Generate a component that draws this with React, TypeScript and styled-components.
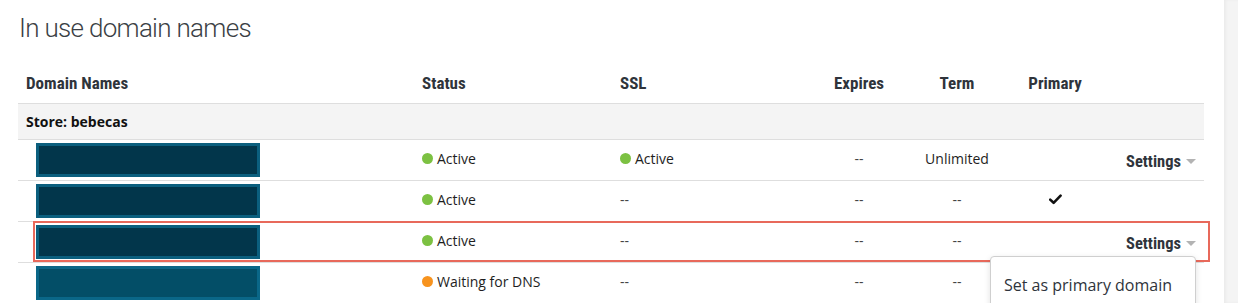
import styled, { createGlobalStyle } from 'styled-components';

const GlobalStyle = createGlobalStyle`
  html, body {
    margin: 0;
    padding: 0;
    background: #ffffff;
  }
  body {
    font-family: "Open Sans", "Liberation Sans", sans-serif;
    color: #1e1e1e;
  }
`;

type Align = 'left' | 'center' | 'right';

interface DomainRow {
  tone: 'dark' | 'light';
  status: { label: string; color: string };
  ssl?: { label: string; color: string };
  term: string;
  primary: boolean;
  settings: boolean;
  highlighted?: boolean;
  menu?: boolean;
}

const columns = [
  { title: 'Domain Names', align: 'left' as Align },
  { title: 'Status', align: 'left' as Align },
  { title: 'SSL', align: 'left' as Align },
  { title: 'Expires', align: 'center' as Align },
  { title: 'Term', align: 'center' as Align },
  { title: 'Primary', align: 'center' as Align },
  { title: '', align: 'right' as Align },
];

const GREEN = '#7cc142';
const ORANGE = '#f7931e';

const rows: DomainRow[] = [
  {
    tone: 'dark',
    status: { label: 'Active', color: GREEN },
    ssl: { label: 'Active', color: GREEN },
    term: 'Unlimited',
    primary: false,
    settings: true,
  },
  {
    tone: 'dark',
    status: { label: 'Active', color: GREEN },
    term: '--',
    primary: true,
    settings: false,
  },
  {
    tone: 'dark',
    status: { label: 'Active', color: GREEN },
    term: '--',
    primary: false,
    settings: true,
    highlighted: true,
    menu: true,
  },
  {
    tone: 'light',
    status: { label: 'Waiting for DNS', color: ORANGE },
    term: '--',
    primary: false,
    settings: false,
  },
];

const App = () => {
  return (
    <>
      <GlobalStyle />
      <Page>
        <Main>
          <Title>In use domain names</Title>
          <Table>
            <Row $height={41}>
              {columns.map((col, i) => (
                <HeadCell key={i} $align={col.align}>
                  {col.title}
                </HeadCell>
              ))}
            </Row>
            <Row $height={36} $shaded>
              <StoreCell>Store: bebecas</StoreCell>
            </Row>
            {rows.map((row, i) => (
              <Row key={i} $height={41}>
                <Cell $align="left">
                  <DomainBlock $tone={row.tone} />
                </Cell>
                <Cell $align="left">
                  <Dot $color={row.status.color} />
                  {row.status.label}
                </Cell>
                <Cell $align="left">
                  {row.ssl ? (
                    <>
                      <Dot $color={row.ssl.color} />
                      {row.ssl.label}
                    </>
                  ) : (
                    <Dash>--</Dash>
                  )}
                </Cell>
                <Cell $align="center">
                  <Dash>--</Dash>
                </Cell>
                <Cell $align="center">
                  {row.term === '--' ? <Dash>--</Dash> : row.term}
                </Cell>
                <Cell $align="center">
                  {row.primary && (
                    <svg width="13" height="11" viewBox="0 0 13 11">
                      <path
                        d="M1.2 5.6 L4.6 8.8 L11.6 1.6"
                        fill="none"
                        stroke="#111"
                        strokeWidth="2.6"
                        strokeLinecap="round"
                        strokeLinejoin="round"
                      />
                    </svg>
                  )}
                </Cell>
                <Cell $align="right">
                  {row.settings && (
                    <SettingsButton>
                      Settings
                      <Caret />
                    </SettingsButton>
                  )}
                  {row.menu && (
                    <Menu>
                      <MenuItem>Set as primary domain</MenuItem>
                    </Menu>
                  )}
                </Cell>
                {row.highlighted && <Highlight />}
              </Row>
            ))}
          </Table>
        </Main>
        <SideStrip />
      </Page>
    </>
  );
};

const Page = styled.div`
  display: flex;
  width: 1238px;
  height: 303px;
  overflow: hidden;
`;

const Main = styled.div`
  width: 1224px;
  flex-shrink: 0;
  padding: 0 20px 0 18px;
  box-sizing: border-box;
`;

const SideStrip = styled.div`
  flex: 1;
  background: #f4f4f4;
  box-shadow: inset 2px 0 3px rgba(0, 0, 0, 0.04);
`;

const Title = styled.h1`
  margin: 0;
  height: 63px;
  padding: 11px 0 0 1px;
  box-sizing: border-box;
  font-family: Roboto, "Liberation Sans", sans-serif;
  font-weight: 300;
  font-size: 26px;
  letter-spacing: -0.7px;
  line-height: 34px;
  color: #3b3f45;
`;

const Table = styled.div`
  display: flex;
  flex-direction: column;
`;

const Row = styled.div<{ $height: number; $shaded?: boolean }>`
  position: relative;
  display: grid;
  grid-template-columns: 396px 198px 198px 98px 98px 98px 1fr;
  height: ${(p) => p.$height}px;
  box-sizing: border-box;
  border-bottom: 1px solid #dedede;
  background: ${(p) => (p.$shaded ? '#f4f4f4' : '#ffffff')};
`;

const justify = (a: Align) =>
  a === 'left' ? 'flex-start' : a === 'center' ? 'center' : 'flex-end';

const HeadCell = styled.div<{ $align: Align }>`
  display: flex;
  align-items: center;
  justify-content: ${(p) => justify(p.$align)};
  padding: 0 8px;
  font-family: "Roboto Condensed", "Liberation Sans Narrow", Roboto, sans-serif;
  font-weight: 700;
  font-size: 17px;
  color: #2f343b;
`;

const Cell = styled.div<{ $align: Align }>`
  position: relative;
  display: flex;
  align-items: center;
  justify-content: ${(p) => justify(p.$align)};
  padding: 0 8px 3px;
  font-size: 14px;
  color: #1e1e1e;
`;

const StoreCell = styled.div`
  grid-column: 1 / -1;
  display: flex;
  align-items: center;
  padding: 0 8px 1px;
  font-weight: 700;
  font-size: 14px;
  color: #111;
`;

const DomainBlock = styled.div<{ $tone: 'dark' | 'light' }>`
  width: 224px;
  height: 34px;
  margin: 3px 0 0 10px;
  box-sizing: border-box;
  border: 3px solid ${(p) => (p.$tone === 'dark' ? '#0b5f7e' : '#0a6788')};
  background: ${(p) => (p.$tone === 'dark' ? '#02364b' : '#034e67')};
`;

const Dot = styled.span<{ $color: string }>`
  display: inline-block;
  width: 11px;
  height: 11px;
  border-radius: 50%;
  background: ${(p) => p.$color};
  margin-right: 4px;
`;

const Dash = styled.span`
  color: #444;
`;

const SettingsButton = styled.div`
  display: flex;
  align-items: center;
  margin-top: 5px;
  font-family: "Roboto Condensed", "Liberation Sans Narrow", Roboto, sans-serif;
  font-weight: 700;
  font-size: 16.5px;
  color: #2f343b;
`;

const Caret = styled.span`
  display: inline-block;
  margin-left: 5px;
  width: 0;
  height: 0;
  border-left: 5px solid transparent;
  border-right: 5px solid transparent;
  border-top: 5px solid #b3b3b3;
`;

const Menu = styled.div`
  position: absolute;
  top: 34px;
  right: 8px;
  width: 206px;
  height: 60px;
  box-sizing: border-box;
  background: #ffffff;
  border: 1px solid #cfcfcf;
  border-radius: 4px;
  box-shadow: 0 2px 6px rgba(0, 0, 0, 0.12);
  z-index: 2;
`;

const MenuItem = styled.div`
  padding: 17px 0 0 13px;
  font-size: 16px;
  line-height: 22px;
  color: #2f343b;
  white-space: nowrap;
`;

const Highlight = styled.div`
  position: absolute;
  left: 15px;
  right: -6px;
  top: -1px;
  height: 41px;
  box-sizing: border-box;
  border: 2px solid #e8695b;
  pointer-events: none;
`;

export default App;
